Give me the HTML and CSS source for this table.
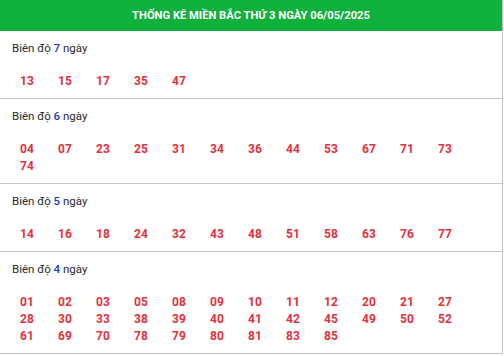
FILE: index.html
```html
<!DOCTYPE html>
<html lang="vi">
<head>
<meta charset="utf-8">
<title>Thống kê miền Bắc</title>
<link rel="stylesheet" href="styles.css">
</head>
<body>
<div class="box">
  <div class="head">THỐNG KÊ MIỀN BẮC THỨ 3 NGÀY 06/05/2025</div>
  <div class="group">
    <div class="label">Biên độ <b>7</b> ngày</div>
    <div class="nums"><span>13</span><span>15</span><span>17</span><span>35</span><span>47</span></div>
  </div>
  <div class="group">
    <div class="label">Biên độ <b>6</b> ngày</div>
    <div class="nums"><span>04</span><span>07</span><span>23</span><span>25</span><span>31</span><span>34</span><span>36</span><span>44</span><span>53</span><span>67</span><span>71</span><span>73</span><span>74</span></div>
  </div>
  <div class="group">
    <div class="label">Biên độ <b>5</b> ngày</div>
    <div class="nums"><span>14</span><span>16</span><span>18</span><span>24</span><span>32</span><span>43</span><span>48</span><span>51</span><span>58</span><span>63</span><span>76</span><span>77</span></div>
  </div>
  <div class="group">
    <div class="label">Biên độ <b>4</b> ngày</div>
    <div class="nums"><span>01</span><span>02</span><span>03</span><span>05</span><span>08</span><span>09</span><span>10</span><span>11</span><span>12</span><span>20</span><span>21</span><span>27</span><span>28</span><span>30</span><span>33</span><span>38</span><span>39</span><span>40</span><span>41</span><span>42</span><span>45</span><span>49</span><span>50</span><span>52</span><span>61</span><span>69</span><span>70</span><span>78</span><span>79</span><span>80</span><span>81</span><span>83</span><span>85</span></div>
  </div>
</div>
</body>
</html>
```
FILE: styles.css
```css
html, body {
  margin: 0;
  padding: 0;
  background: #fff;
}
body {
  font-family: Roboto, "Liberation Sans", Arial, sans-serif;
}
.box {
  width: 502px;
  border-right: 1px solid #c4c4c4;
}
.head {
  background: #0fb03c;
  color: #fff;
  font-weight: bold;
  font-size: 11.2px;
  height: 31px;
  line-height: 31px;
  text-align: center;
}
.group {
  border-bottom: 1px solid #c4c4c4;
  padding: 7px 0 8px 12px;
}
.label {
  font-size: 11.5px;
  line-height: 20px;
  color: #2a2a2a;
}
.label b {
  color: #1a3bbf;
  font-weight: 500;
}
.nums {
  display: grid;
  grid-template-columns: repeat(12, 38px);
  margin-top: 15px;
  padding-left: 8px;
  font-size: 12px;
  font-weight: bold;
  line-height: 17px;
  color: #e2313c;
}
```
